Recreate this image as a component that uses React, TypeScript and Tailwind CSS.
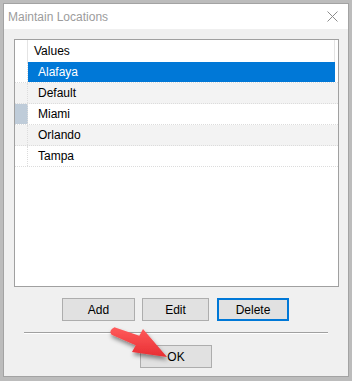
import React from "react";

const rows = [
  { name: "Alafaya", selected: true },
  { name: "Default" },
  { name: "Miami", current: true },
  { name: "Orlando" },
  { name: "Tampa" },
];

const Button = ({ label, width, focused }: { label: string; width: string; focused?: boolean }) => (
  <button
    type="button"
    className={`${width} h-[23px] bg-[#e1e1e1] text-[12px] text-black flex items-center justify-center ${
      focused ? "border-2 border-[#0078d7]" : "border border-[#adadad]"
    }`}
  >
    {label}
  </button>
);

const App = () => {
  return (
    <div
      className="w-[352px] h-[381px] bg-[#bcbcbc] pt-[3px] pl-[3px] relative overflow-hidden"
      style={{ fontFamily: '"Liberation Sans", Arial, sans-serif' }}
    >
      <div className="w-[346px] h-[374px] border border-[#a3a3a3] bg-[#f0f0f0] flex flex-col">
        {/* title bar */}
        <div className="h-[25px] bg-white flex items-center justify-between pl-[4px] pr-[10px]">
          <span className="text-[12px] text-[#9c9c9c]">Maintain Locations</span>
          <svg width="11" height="11" viewBox="0 0 11 11">
            <path d="M0.5 0.5 L10.5 10.5 M10.5 0.5 L0.5 10.5" stroke="#8c8c8c" strokeWidth="1" />
          </svg>
        </div>

        {/* list */}
        <div className="ml-[10px] mt-[10px] w-[325px] h-[248px] border border-[#a0a0a0] bg-white flex flex-col">
          <div className="h-[22px] flex">
            <div className="w-[13px] border-r border-[#e4e4e4]" />
            <div className="w-[307px] border-r border-[#e4e4e4] pl-[6px] flex items-center text-[12px] text-black">
              Values
            </div>
          </div>
          {rows.map((r, i) => (
            <div
              key={r.name}
              className={`h-[21px] flex border-b border-dotted border-[#dcdcdc] ${
                i % 2 === 1 ? "bg-[#f3f3f3]" : "bg-white"
              }`}
            >
              <div className={`w-[13px] ${r.current ? "bg-[#bfccd9]" : ""} border-r border-dotted border-[#dcdcdc]`} />
              <div
                className={`w-[307px] pl-[10px] flex items-center text-[12px] ${
                  r.selected ? "bg-[#0078d7] text-white" : "text-black"
                }`}
              >
                {r.name}
              </div>
            </div>
          ))}
        </div>

        {/* buttons */}
        <div className="mt-[11px] ml-[58px] flex">
          <Button label="Add" width="w-[73px]" />
          <div className="w-[7px]" />
          <Button label="Edit" width="w-[67px]" />
          <div className="w-[8px]" />
          <Button label="Delete" width="w-[72px]" focused />
        </div>

        <div className="mt-[11px] ml-[20px] w-[304px] h-[2px] border-t border-[#a0a0a0] border-b border-b-white" />

        <div className="mt-[11px] ml-[136px]">
          <Button label="OK" width="w-[72px]" />
        </div>
      </div>

      {/* red arrow annotation */}
      <svg className="absolute left-[100px] top-[318px]" width="80" height="50" viewBox="0 0 80 50">
        <defs>
          <filter id="sh" x="-20%" y="-20%" width="140%" height="150%">
            <feDropShadow dx="1" dy="3" stdDeviation="2" floodColor="#000" floodOpacity="0.45" />
          </filter>
          <linearGradient id="rg" x1="0" y1="0" x2="0" y2="1">
            <stop offset="0" stopColor="#ff5b5b" />
            <stop offset="1" stopColor="#e82e33" />
          </linearGradient>
        </defs>
        <path
          d="M14.4 9.3 L39.3 17.8 L43 11 L67 39 L32 34 L35.7 27.2 L11.6 16.7 Q8 13 14.4 9.3 Z"
          fill="url(#rg)"
          filter="url(#sh)"
        />
      </svg>
    </div>
  );
};

export default App;
